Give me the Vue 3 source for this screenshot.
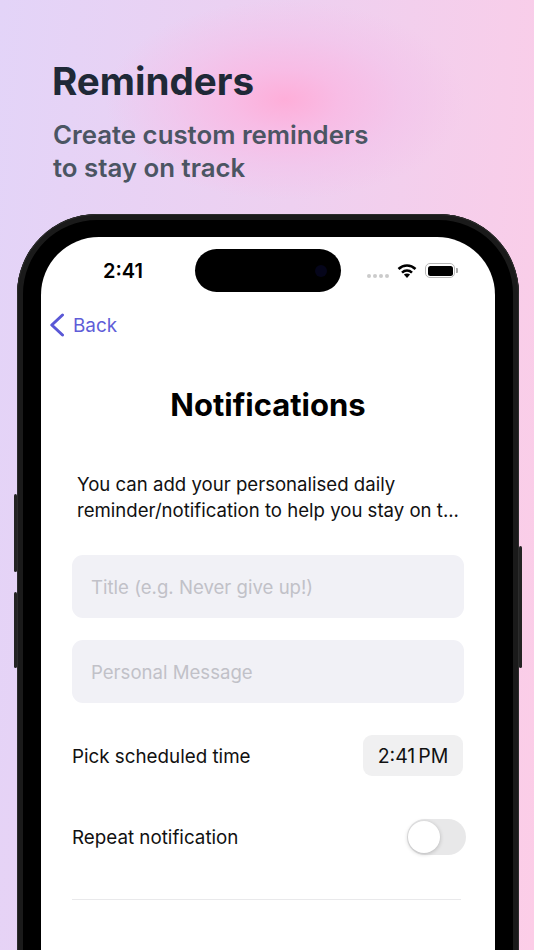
<template>
  <div class="page">
    <div class="glow"></div>
    <header class="intro">
      <h1>Reminders</h1>
      <p>Create custom reminders<br />to stay on track</p>
    </header>

    <div class="phone">
      <!-- side buttons -->
      <span class="side vol-up"></span>
      <span class="side vol-down"></span>
      <span class="side power"></span>

      <div class="bezel">
        <div class="screen">
          <div class="status">
            <span class="clock">2:41</span>
            <div class="island"><span class="lens"></span></div>
            <div class="status-icons">
              <div class="dots"><i></i><i></i><i></i><i></i></div>
              <svg class="wifi" width="20" height="14" viewBox="0 0 20 14">
                <path d="M1.500 5C3.800 2.800 6.800 1.500 10 1.500S16.200 2.800 18.500 5" fill="none" stroke="#000" stroke-width="2.600" />
                <path d="M5 8.600C6.400 7.300 8.100 6.500 10 6.500s3.600.8 5 2.100" fill="none" stroke="#000" stroke-width="2.600" />
                <path d="M6.900 10.500c.8-.7 1.900-1.100 3.100-1.100s2.300.4 3.100 1.100L10 14z" fill="#000" />
              </svg>
              <div class="battery"><span class="cell"></span><span class="cap"></span></div>
            </div>
          </div>

          <div class="nav">
            <svg width="16" height="24" viewBox="0 0 16 24">
              <path d="M13.500 2 2.800 12l10.700 10" fill="none" stroke="#5a58d6" stroke-width="3" stroke-linecap="round" stroke-linejoin="round" />
            </svg>
            <span>Back</span>
          </div>

          <h2>Notifications</h2>
          <p class="desc">You can add your personalised daily<br />reminder/notification to help you stay on t...</p>

          <div class="form">
            <div class="field">Title (e.g. Never give up!)</div>
            <div class="field">Personal Message</div>
            <div class="row time-row">
              <span class="label">Pick scheduled time</span>
              <div class="time">2:41<span class="ampm">PM</span></div>
            </div>
            <div class="row repeat-row">
              <span>Repeat notification</span>
              <div class="toggle"><span class="knob"></span></div>
            </div>
            <div class="divider"></div>
          </div>
        </div>
      </div>
    </div>
  </div>
</template>

<script setup>
</script>

<style>
html, body {
  margin: 0;
  background: #e8d2f2;
}
</style>

<style scoped>
.page {
  position: relative;
  width: 534px;
  height: 950px;
  overflow: hidden;
  background: linear-gradient(95deg, #e3d4f8 0%, #eed0f0 50%, #fccde7 100%);
  font-family: Inter, "Liberation Sans", sans-serif;
}
.glow {
  position: absolute;
  left: 105px;
  top: 0;
  width: 360px;
  height: 200px;
  background: radial-gradient(closest-side, #feaed9 0%, rgba(249, 186, 228, 0.9) 30%, rgba(244, 194, 234, 0.6) 65%, rgba(242, 205, 238, 0) 100%);
}
.intro {
  position: relative;
  padding: 58px 0 0 52px;
  height: 156px;
}
h1 {
  margin: 0;
  font-size: 38.600px;
  line-height: 46px;
  font-weight: 700;
  color: #1f2937;
}
.intro p {
  margin: 14px 0 0 1px;
  font-size: 25.800px;
  line-height: 33px;
  font-weight: 600;
  color: #4b5563;
}
.phone {
  position: relative;
  margin-left: 17px;
  width: 502px;
}
.bezel {
  box-sizing: border-box;
  width: 502px;
  height: 800px;
  padding: 23px 24px 0;
  background: #000;
  border-radius: 80px 80px 0 0;
  box-shadow: inset 0 0 0 1px #2c2c2c, inset 0 0 0 6px #1a1a1a;
}
.side {
  position: absolute;
  width: 3px;
  background: #232323;
  border-radius: 2px;
}
.vol-up { left: -3px; top: 280px; height: 78px; }
.vol-down { left: -3px; top: 378px; height: 76px; }
.power { right: -3px; top: 332px; height: 122px; }
.screen {
  height: 777px;
  background: #fff;
  border-radius: 58px 58px 0 0;
  overflow: hidden;
}
.status {
  display: flex;
  align-items: center;
  height: 67px;
  padding: 0 36px 0 62px;
  box-sizing: border-box;
}
.clock {
  font-size: 20px;
  font-weight: 600;
  color: #000;
  width: 92px;
}
.island {
  display: flex;
  align-items: center;
  justify-content: flex-end;
  width: 146px;
  height: 43px;
  padding-right: 14px;
  box-sizing: border-box;
  border-radius: 22px;
  background: #000;
}
.lens {
  width: 12px;
  height: 12px;
  border-radius: 50%;
  background: #05051a;
}
.status-icons {
  display: flex;
  align-items: center;
  margin-left: 26px;
}
.dots {
  display: flex;
  gap: 2px;
  margin-top: 10px;
}
.dots i {
  width: 4px;
  height: 4px;
  border-radius: 50%;
  background: #cbcbcb;
}
.wifi {
  margin: 0 0 0 8px;
}
.battery {
  display: flex;
  align-items: center;
  margin-left: 8px;
}
.cell {
  display: block;
  box-sizing: border-box;
  width: 30px;
  height: 15px;
  padding: 1.500px;
  border: 1px solid #b8b8b8;
  border-radius: 5px;
  background: #000;
  background-clip: content-box;
}
.cap {
  width: 2px;
  height: 5px;
  margin-left: 1px;
  background: #aaa;
  border-radius: 0 1px 1px 0;
}
.nav {
  display: flex;
  align-items: center;
  gap: 8px;
  margin: 8px 0 0 8px;
  height: 26px;
  color: #5f5dd8;
  font-size: 18.900px;
}
h2 {
  margin: 48px 0 0;
  text-align: center;
  font-size: 31px;
  line-height: 38px;
  font-weight: 700;
  color: #000;
}
.desc {
  margin: 47px 0 0 36px;
  font-size: 18.600px;
  line-height: 26px;
  color: #111;
  white-space: nowrap;
}
.form {
  margin: 32px 31px 0 31px;
}
.field {
  display: flex;
  align-items: center;
  height: 63px;
  padding-left: 19px;
  margin-bottom: 22px;
  border-radius: 11px;
  background: #f1f1f6;
  color: #c1c1c8;
  font-size: 18.600px;
}
.row {
  display: flex;
  align-items: center;
  justify-content: space-between;
  color: #111;
  font-size: 18.800px;
}
.time-row {
  margin-top: 32px;
  height: 41px;
}
.label {
  padding-top: 2px;
}
.time {
  display: flex;
  align-items: center;
  justify-content: center;
  gap: 3px;
  width: 100px;
  height: 41px;
  margin-right: 1px;
  border-radius: 9px;
  background: #f0f0f1;
  font-size: 19.500px;
}
.repeat-row {
  margin-top: 43px;
  height: 36px;
  margin-right: -2px;
}
.toggle {
  width: 59px;
  height: 36px;
  padding: 2px 1px;
  box-sizing: border-box;
  border-radius: 18px;
  background: #e8e8e9;
}
.knob {
  display: block;
  width: 32px;
  height: 32px;
  border-radius: 50%;
  background: #fff;
  box-shadow: 0 1px 4px rgba(0, 0, 0, 0.22);
}
.divider {
  height: 1px;
  margin: 44px 3px 0 0;
  background: #e9e9eb;
}
</style>
